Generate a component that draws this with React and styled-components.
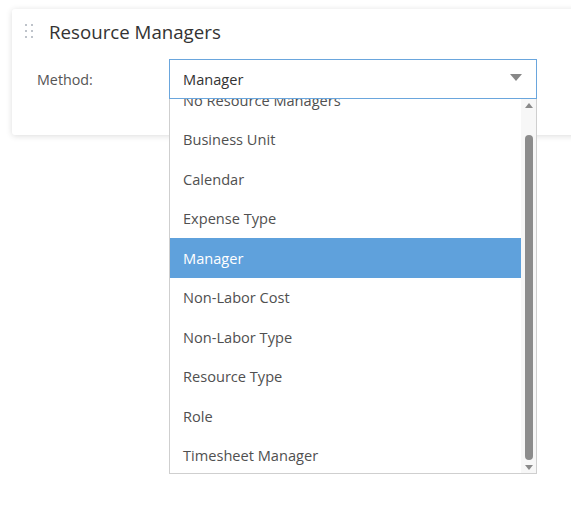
import React from "react";
import styled, { createGlobalStyle } from "styled-components";

const options = [
  "No Resource Managers",
  "Business Unit",
  "Calendar",
  "Expense Type",
  "Manager",
  "Non-Labor Cost",
  "Non-Labor Type",
  "Resource Type",
  "Role",
  "Timesheet Manager",
];

const selected = "Manager";

const GlobalStyle = createGlobalStyle`
  html, body {
    margin: 0;
    padding: 0;
    background: #fff;
    font-family: "Segoe UI", "Open Sans", "Noto Sans", sans-serif;
  }
`;

const Page = styled.div`
  width: 571px;
  height: 512px;
  overflow: hidden;
  padding: 9px 0 0 12px;
  box-sizing: border-box;
`;

const Card = styled.div`
  width: 620px;
  height: 126px;
  background: #fff;
  border-radius: 3px;
  box-shadow: 0 1px 6px rgba(0, 0, 0, 0.14);
  box-sizing: border-box;
  padding: 10px 0 0 12px;
`;

const Header = styled.div`
  display: flex;
  align-items: center;
  gap: 16px;
  height: 24px;
`;

const Handle = styled.div`
  display: grid;
  grid-template-columns: repeat(2, 2px);
  grid-auto-rows: 2px;
  column-gap: 4px;
  row-gap: 4px;
  padding-left: 1px;

  span {
    width: 2px;
    height: 2px;
    border-radius: 50%;
    background: #a9afb8;
  }
`;

const Title = styled.h2`
  margin: 0;
  font-size: 18.7px;
  font-weight: 400;
  color: #333;
`;

const FormRow = styled.div`
  display: flex;
  align-items: center;
  margin-top: 16px;
  padding-left: 13px;
`;

const Label = styled.label`
  width: 132px;
  font-size: 14.3px;
  color: #555;
`;

const SelectWrap = styled.div`
  position: relative;
  width: 368px;
`;

const SelectBox = styled.div`
  height: 40px;
  box-sizing: border-box;
  border: 1px solid #6aa6dd;
  display: flex;
  align-items: center;
  justify-content: space-between;
  padding: 0 14px 0 13px;
  font-size: 14.6px;
  color: #333;
`;

const Caret = styled.span`
  width: 0;
  height: 0;
  border-left: 6px solid transparent;
  border-right: 6px solid transparent;
  border-top: 7px solid #888;
  margin-top: -3px;
`;

const Dropdown = styled.div`
  position: absolute;
  top: 100%;
  left: 0;
  width: 368px;
  height: 375px;
  box-sizing: border-box;
  border: 1px solid #cfcfcf;
  border-top: none;
  background: #fff;
  display: flex;
  z-index: 5;
`;

const Viewport = styled.div`
  flex: 1;
  overflow: hidden;
`;

const List = styled.ul`
  list-style: none;
  margin: -19px 0 0;
  padding: 0;
`;

const Item = styled.li`
  height: 39.5px;
  display: flex;
  align-items: center;
  padding-left: 13px;
  font-size: 14.6px;
  color: ${(p) => (p.$active ? "#fff" : "#505050")};
  background: ${(p) => (p.$active ? "#5fa1dc" : "transparent")};
`;

const ScrollTrack = styled.div`
  width: 15px;
  background: #f7f7f7;
  display: flex;
  flex-direction: column;
  align-items: center;
  padding: 4px 0 3px;
  box-sizing: border-box;
`;

const Arrow = styled.span`
  width: 0;
  height: 0;
  border-left: 4px solid transparent;
  border-right: 4px solid transparent;
  ${(p) =>
    p.$up ? "border-bottom: 5px solid #8a8a8a;" : "border-top: 5px solid #8a8a8a;"}
`;

const Thumb = styled.div`
  width: 8px;
  flex: 1;
  margin: 27px 0 5px;
  border-radius: 4px;
  background: #8c8c8c;
`;

export default function App() {
  return (
    <>
      <GlobalStyle />
      <Page>
        <Card>
          <Header>
            <Handle>
              {Array.from({ length: 6 }).map((_, i) => (
                <span key={i} />
              ))}
            </Handle>
            <Title>Resource Managers</Title>
          </Header>
          <FormRow>
            <Label>Method:</Label>
            <SelectWrap>
              <SelectBox>
                <span>{selected}</span>
                <Caret />
              </SelectBox>
              <Dropdown>
                <Viewport>
                  <List>
                    {options.map((o) => (
                      <Item key={o} $active={o === selected}>
                        {o}
                      </Item>
                    ))}
                  </List>
                </Viewport>
                <ScrollTrack>
                  <Arrow $up />
                  <Thumb />
                  <Arrow />
                </ScrollTrack>
              </Dropdown>
            </SelectWrap>
          </FormRow>
        </Card>
      </Page>
    </>
  );
}
